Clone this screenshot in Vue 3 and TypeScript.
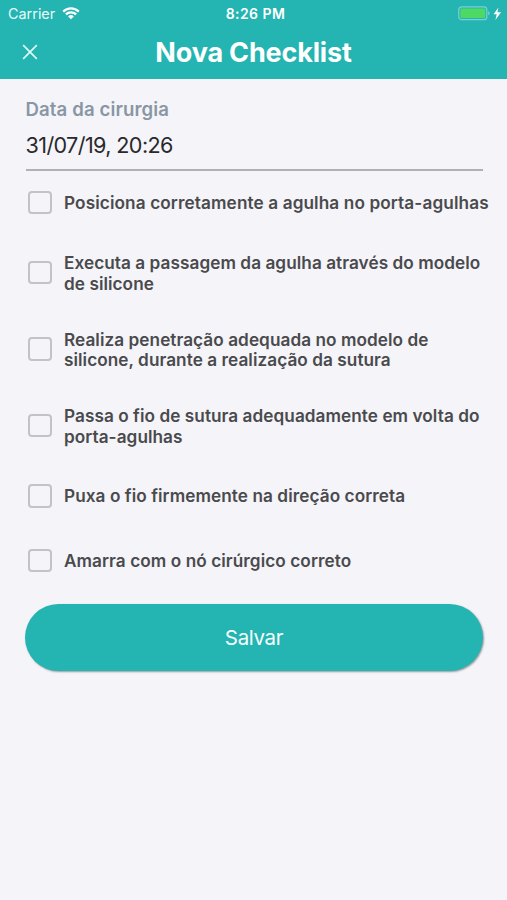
<script setup lang="ts">
import { ref } from 'vue'

interface ChecklistItem {
  lines: string[]
  checked: boolean
}

const surgeryDate = ref('31/07/19, 20:26')

const items = ref<ChecklistItem[]>([
  { lines: ['Posiciona corretamente a agulha no porta-agulhas'], checked: false },
  { lines: ['Executa a passagem da agulha através do modelo', 'de silicone'], checked: false },
  { lines: ['Realiza penetração adequada no modelo de', 'silicone, durante a realização da sutura'], checked: false },
  { lines: ['Passa o fio de sutura adequadamente em volta do', 'porta-agulhas'], checked: false },
  { lines: ['Puxa o fio firmemente na direção correta'], checked: false },
  { lines: ['Amarra com o nó cirúrgico correto'], checked: false },
])
</script>

<template>
  <main class="screen">
    <header class="header">
      <div class="status">
        <div class="carrier">
          <span>Carrier</span>
          <svg class="wifi" width="18" height="13" viewBox="0 0 18 13">
            <path d="M1.2 4.6a11 11 0 0 1 15.6 0" />
            <path d="M3.9 7.4a7.3 7.3 0 0 1 10.2 0" />
            <path class="solid" d="M9 12.3 6.1 9.4a4.1 4.1 0 0 1 5.8 0z" />
          </svg>
        </div>
        <span class="clock">8:26 PM</span>
        <svg class="battery" width="45" height="15" viewBox="0 0 45 15">
          <rect class="shell" x=".8" y=".9" width="28" height="12.8" rx="2.8" />
          <rect class="charge" x="2.4" y="2.5" width="24.8" height="9.6" rx="1.2" />
          <path class="cap" d="M30.2 5.1c2 .8 2 3.6 0 4.4z" />
          <path class="bolt" d="M40.4 1.4 35.6 8.3h3.1l-1.3 5.6 5.7-7.6h-3.6z" />
        </svg>
      </div>
      <div class="navbar">
        <button class="close" type="button" aria-label="Fechar">
          <svg width="16" height="16" viewBox="0 0 16 16">
            <path d="M1.2 1.2 14.8 14.8M14.8 1.2 1.2 14.8" />
          </svg>
        </button>
        <h1 class="title">Nova Checklist</h1>
      </div>
    </header>

    <section class="content">
      <div class="field">
        <span class="label">Data da cirurgia</span>
        <span class="value">{{ surgeryDate }}</span>
      </div>

      <ul class="list">
        <li v-for="(item, index) in items" :key="index" class="item">
          <label class="row">
            <input v-model="item.checked" class="box" type="checkbox" />
            <span class="text" :class="{ wrapped: item.lines.length > 1 }">
              <span v-for="line in item.lines" :key="line" class="line">{{ line }}</span>
            </span>
          </label>
        </li>
      </ul>

      <button class="save" type="button"><span class="save-text">Salvar</span></button>
    </section>
  </main>
</template>

<style>
body {
  background: #f4f4f9;
}
</style>

<style scoped>
.screen {
  min-height: 900px;
  box-sizing: border-box;
  background: #f4f4f9;
  color: #4a4a4d;
  font-family: Inter, "Liberation Sans", sans-serif;
}

.header {
  height: 79px;
  background: #24b4b1;
  color: #fff;
}

.status {
  display: grid;
  grid-template-columns: 1fr auto 1fr;
  align-items: center;
  height: 27px;
  padding: 0 4px 0 8px;
}

.carrier {
  display: flex;
  align-items: center;
  gap: 7px;
  font-size: 14.4px;
  color: #e8fbfa;
}

.wifi path {
  fill: none;
  stroke: #fff;
  stroke-width: 2.2;
}

.wifi .solid {
  fill: #fff;
  stroke: none;
}

.clock {
  font-size: 14px;
  font-weight: 600;
  letter-spacing: 0.45px;
}

.battery {
  justify-self: end;
}

.shell {
  fill: none;
  stroke: #7dd0d2;
  stroke-width: 1.2;
}

.charge {
  fill: #4cd964;
}

.cap {
  fill: #7dd0d2;
}

.bolt {
  fill: #fff;
}

.navbar {
  display: grid;
  grid-template-columns: 60px 1fr 60px;
  align-items: center;
  height: 50px;
}

.close {
  display: flex;
  padding: 0 0 0 22px;
  border: 0;
  background: none;
}

.close path {
  fill: none;
  stroke: #dff8f7;
  stroke-width: 1.7;
}

.title {
  margin: 0;
  padding-top: 2px;
  font-size: 27px;
  font-weight: 700;
  letter-spacing: -0.17px;
  line-height: 34px;
  text-align: center;
  white-space: nowrap;
}

.field {
  display: flex;
  flex-direction: column;
  height: 90px;
  box-sizing: border-box;
  margin: 2px 24.5px 0 25.5px;
  padding-top: 17px;
  border-bottom: 2px solid #b0b0b5;
}

.label {
  color: #8996a3;
  font-size: 18.6px;
  font-weight: 600;
  letter-spacing: 0.12px;
  line-height: 22px;
}

.value {
  margin-top: 11px;
  color: #29292b;
  font-size: 21.6px;
  letter-spacing: -0.62px;
  line-height: 28px;
}

.list {
  margin: 0;
  padding: 0;
  list-style: none;
}

.item {
  display: flex;
  align-items: center;
  min-height: 64.5px;
  padding: 0 0 0 28px;
}

.item:first-child {
  min-height: 63px;
}

.row {
  display: flex;
  align-items: center;
  gap: 12.5px;
  padding: 17.5px 0;
}

.box {
  appearance: none;
  flex: none;
  width: 23.5px;
  height: 23.5px;
  margin: 0;
  box-sizing: border-box;
  border: 2px solid #c3c3c7;
  border-radius: 4px;
}

.box:checked {
  border-color: #24b4b1;
  background: #24b4b1;
}

.text {
  padding-top: 2px;
  font-size: 17.2px;
  font-weight: 600;
  letter-spacing: 0.07px;
  line-height: 20.75px;
  white-space: nowrap;
}

.text.wrapped {
  padding-top: 3px;
  margin: -1.5px 0;
  letter-spacing: 0.055px;
}

.item:first-child .text {
  letter-spacing: 0.11px;
}

.line {
  display: block;
}

.save {
  display: flex;
  align-items: center;
  justify-content: center;
  width: 458px;
  height: 67px;
  margin: 11px 0 0 25px;
  padding: 0;
  border: 0;
  border-radius: 34px;
  background: #24b4b1;
  box-shadow: 1px 1px 2px rgba(0, 0, 0, 0.38);
  color: #f4fffe;
  font: 400 20.5px Inter, "Liberation Sans", sans-serif;
  letter-spacing: -0.35px;
}
</style>
